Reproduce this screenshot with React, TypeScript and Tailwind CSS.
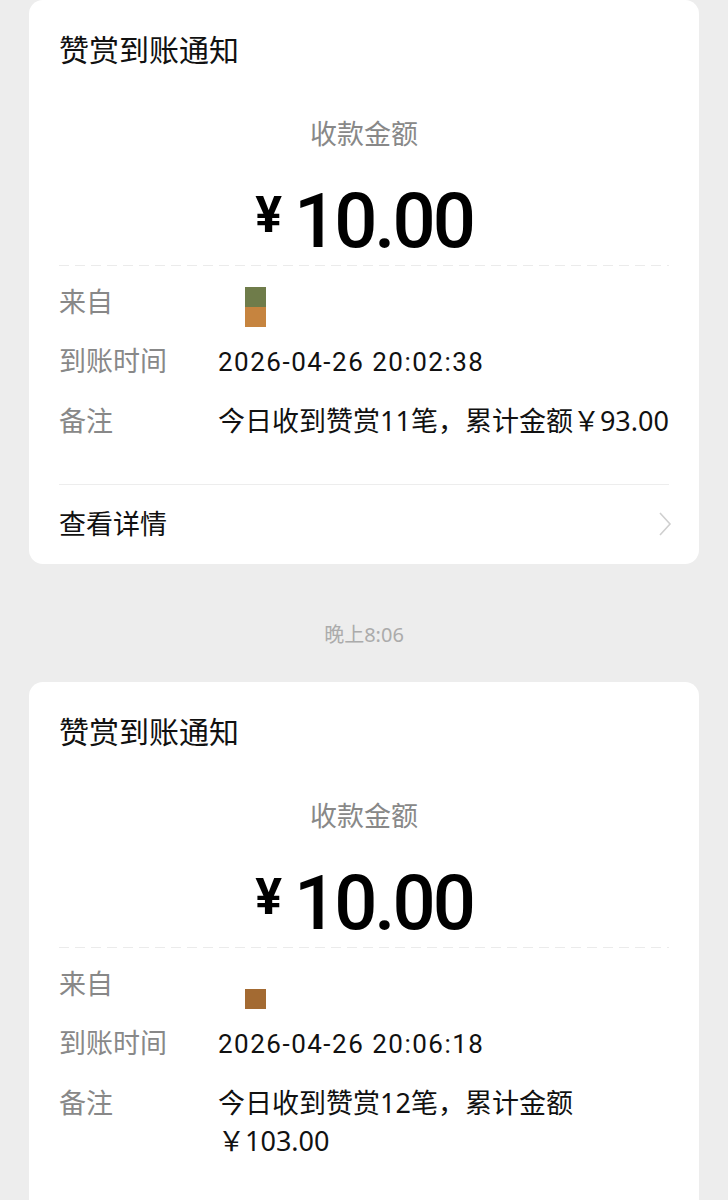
import React from 'react'

type Notice = {
  time: string
  note: string[]
  avatarTop?: string
  avatarBottom: string
  showDetail: boolean
}

const notices: Notice[] = [
  {
    time: '2026-04-26 20:02:38',
    note: ['今日收到赞赏11笔，累计金额￥93.00'],
    avatarTop: '#6f7c4a',
    avatarBottom: '#c6843f',
    showDetail: true,
  },
  {
    time: '2026-04-26 20:06:18',
    note: ['今日收到赞赏12笔，累计金额', '￥103.00'],
    avatarBottom: '#a36a32',
    showDetail: false,
  },
]

const cjk = { fontFamily: '"Noto Sans", "Noto Sans CJK SC", sans-serif' }
const num = { fontFamily: 'Roboto, "Noto Sans CJK SC", sans-serif' }

function Row({ label, children }: { label: string; children: React.ReactNode }) {
  return (
    <div className="flex">
      <div className="w-[159px] shrink-0 text-[27px] leading-[38px] text-[#888888]">{label}</div>
      <div className="flex-1 text-[27px] leading-[38px] text-[#111111]">{children}</div>
    </div>
  )
}

function NoticeCard({ n }: { n: Notice }) {
  return (
    <div
      className={`mx-[29px] rounded-[14px] bg-white px-[30px] pt-[30px] ${n.showDetail ? 'pb-[21px]' : 'pb-[80px]'}`}
    >
      <div className="text-[30px] leading-[40px] text-[#111111]">赞赏到账通知</div>

      <div className="mt-[45px] text-center text-[27px] leading-[38px] text-[#888888]">收款金额</div>

      {/* amount */}
      <div className="mt-[28px] flex h-[80px] items-start justify-center text-black" style={num}>
        <span className="mt-[9px] text-[50px] leading-[50px] font-bold">¥</span>
        <span className="ml-[12px] text-[76px] leading-[80px] font-medium tracking-[-3px]">10.00</span>
      </div>

      <div className="mt-[4px] h-px bg-[repeating-linear-gradient(to_right,#ebebeb_0_10px,transparent_10px_16px)]" />

      <div className="mt-[17px] flex flex-col gap-[21px]">
        <Row label="来自">
          <div className="flex h-[38px] items-start pl-[27px]">
            <div className="mt-[4px] flex h-[40px] w-[21px] flex-col">
              <div className="h-[20px]" style={{ background: n.avatarTop ?? 'transparent' }} />
              <div className="h-[20px]" style={{ background: n.avatarBottom }} />
            </div>
          </div>
        </Row>
        <Row label="到账时间">
          <span style={num} className="text-[26px] tracking-[1.5px]">{n.time}</span>
        </Row>
        <Row label="备注">
          {n.note.map((line) => (
            <div key={line} className="whitespace-nowrap">{line}</div>
          ))}
        </Row>
      </div>

      {n.showDetail && (
        <>
          <div className="mt-[44px] h-px bg-[#ededed]" />
          <div className="mt-[20px] flex items-center justify-between">
            <span className="text-[27px] leading-[38px] text-[#111111]">查看详情</span>
            <svg width="14" height="24" viewBox="0 0 14 24" className="mr-[-3px]">
              <polyline points="2,1 12,12 2,23" fill="none" stroke="#cfcfcf" strokeWidth="1.6" />
            </svg>
          </div>
        </>
      )}
    </div>
  )
}

export default function App() {
  return (
    <div className="h-[1200px] w-[728px] overflow-hidden bg-[#ededed]" style={cjk}>
      <NoticeCard n={notices[0]} />
      <div className="pt-[57px] pb-[33px] text-center text-[20px] leading-[28px] text-[#ababab]">晚上8:06</div>
      <NoticeCard n={notices[1]} />
    </div>
  )
}
